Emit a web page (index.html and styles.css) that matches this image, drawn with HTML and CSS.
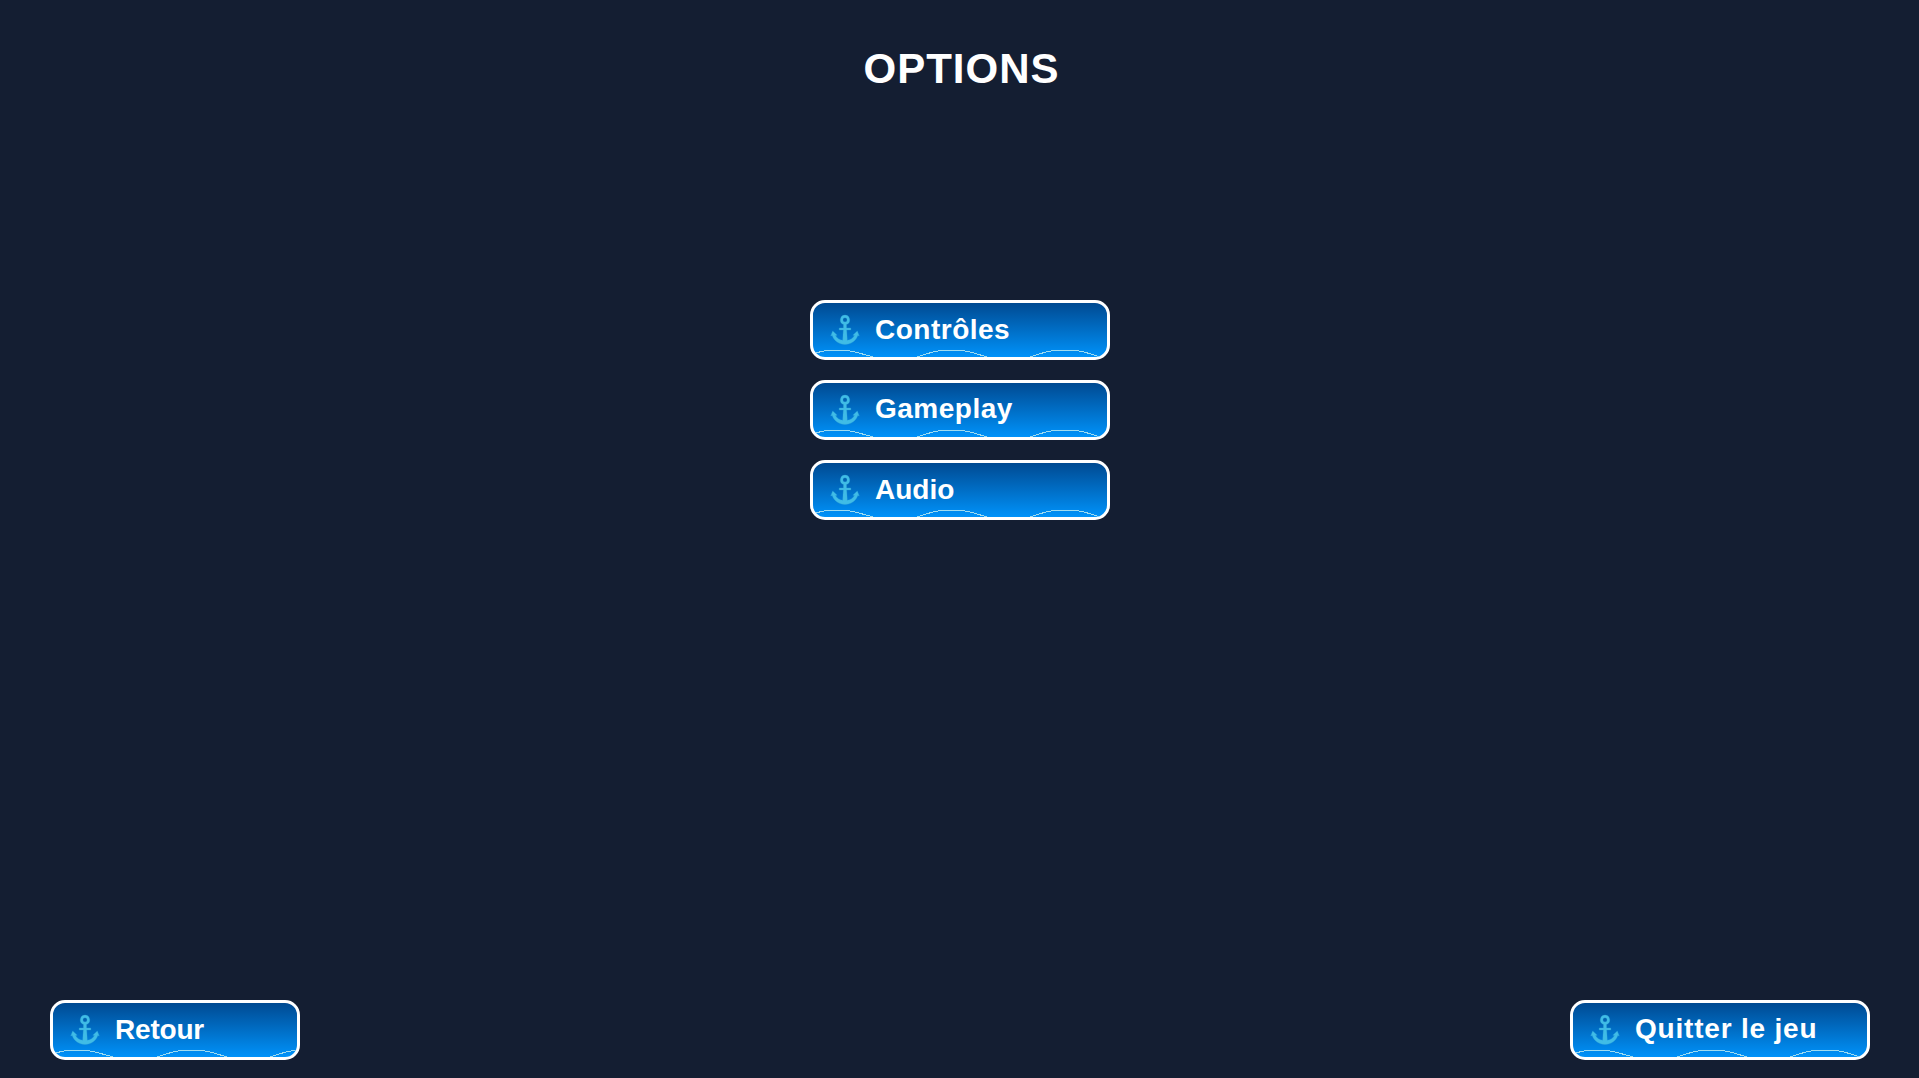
FILE: index.html
```html
<!DOCTYPE html>
<html lang="fr">
  <head>
    <meta charset="UTF-8">
    <title>Options</title>
    <link rel="stylesheet" href="styles.css">
  </head>
  <body>
    <svg class="sprites" aria-hidden="true">
      <symbol id="anchor" viewBox="0 0 30 32">
        <path fill-rule="evenodd" d="M15 1a4.900 4.900 0 0 1 1.500 9.500L16.600 14H20.800v2h-4.100l.6 10.300c3.200-.4 5.800-2 7.200-4.700l-1.700-.4 4.500-4.200 2 5-1.500-.5c-1.800 5.500-7 9-12.800 9s-11-3.500-12.800-9L.7 22l2-5 4.500 4.200-1.700.4c1.400 2.700 4 4.300 7.200 4.700L13.300 16H9.200v-2h4.200l.1-3.500A4.900 4.900 0 0 1 15 1zm0 2.800a2.100 2.100 0 1 0 0 4.200 2.100 2.100 0 0 0 0-4.200z"/>
      </symbol>
      <symbol id="waves" viewBox="0 0 300 60">
        <polyline points="5,53.500 11,51.500 17,50.500 37,50.500 44,51.600 65,57.500"/>
        <polyline points="105,57.500 124,51.600 131,50.500 152,50.500 159,51.600 179,57.500"/>
        <polyline points="218,57.500 237,51.600 244,50.500 266,50.500 273,51.600 292,57.500"/>
      </symbol>
    </svg>

    <div class="screen">
      <h1>OPTIONS</h1>

      <div class="menu">
        <button class="btn controles">
          <svg class="waves"><use href="#waves"/></svg>
          <svg class="anchor"><use href="#anchor"/></svg>
          <span>Contrôles</span>
        </button>
        <button class="btn gameplay">
          <svg class="waves"><use href="#waves"/></svg>
          <svg class="anchor"><use href="#anchor"/></svg>
          <span>Gameplay</span>
        </button>
        <button class="btn audio">
          <svg class="waves"><use href="#waves"/></svg>
          <svg class="anchor"><use href="#anchor"/></svg>
          <span>Audio</span>
        </button>
      </div>

      <div class="footer">
        <button class="btn retour">
          <svg class="waves"><use href="#waves"/></svg>
          <svg class="anchor"><use href="#anchor"/></svg>
          <span>Retour</span>
        </button>
        <button class="btn quitter">
          <svg class="waves"><use href="#waves"/></svg>
          <svg class="anchor"><use href="#anchor"/></svg>
          <span>Quitter le jeu</span>
        </button>
      </div>
    </div>
  </body>
</html>
```
FILE: styles.css
```css
* {
  box-sizing: border-box;
}

body {
  background-color: #141e32;
  font-family: "Liberation Sans", Arial, sans-serif;
  margin: 0;
}

.sprites {
  display: none;
}

.screen {
  display: flex;
  flex-direction: column;
  height: 100vh;
  overflow: hidden;
  padding: 45px 49px 18px 50px;
}

h1 {
  color: #fff;
  font-size: 42px;
  font-weight: bold;
  letter-spacing: 1px;
  line-height: 48px;
  margin: 0;
  padding-left: 3px;
  text-align: center;
}

.menu {
  align-items: center;
  display: flex;
  flex-direction: column;
  gap: 20px;
  margin-top: 207px;
}

.footer {
  display: flex;
  justify-content: space-between;
  margin-top: auto;
}

.btn {
  align-items: center;
  background: linear-gradient(#00468c, #0096ff) border-box;
  border: 3px solid #fff;
  border-radius: 15px;
  color: #fff;
  cursor: pointer;
  display: flex;
  font-family: inherit;
  font-size: 28px;
  font-weight: bold;
  gap: 15px;
  height: 60px;
  line-height: 32px;
  overflow: hidden;
  padding: 0 0 0 17px;
  position: relative;
  white-space: pre;
  width: 300px;
}

/* the wave line runs behind the label, along the bottom edge */
.waves {
  fill: none;
  height: 60px;
  left: -3px;
  position: absolute;
  shape-rendering: crispEdges;
  stroke: #a0dcf0;
  stroke-width: 1;
  top: -3px;
  width: 300px;
}

.anchor {
  fill: #40bce6;
  height: 32px;
  stroke: #34a8d8;
  stroke-width: 0.3;
  width: 30px;
}

.btn span {
  position: relative;
}

.controles {
  letter-spacing: 0.5px;
}

.gameplay {
  letter-spacing: 0.5px;
}

.quitter {
  letter-spacing: 0.8px;
}

.gameplay span,
.quitter span {
  top: -1px;
}

.retour {
  letter-spacing: -0.2px;
  width: 250px;
}
```
